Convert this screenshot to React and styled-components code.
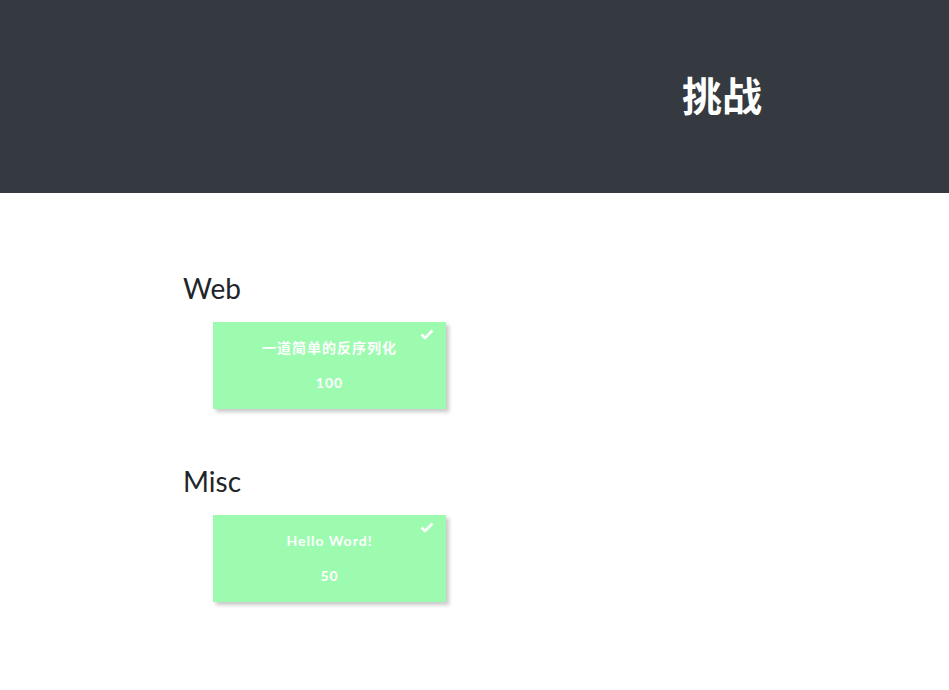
import React from 'react'
import styled, { createGlobalStyle } from 'styled-components';

const Global = createGlobalStyle`
  body {
    margin:0;
    background:#fff;
    font-family:Lato, "Noto Sans CJK SC", sans-serif;
  }
`;

const Header = styled.div`
  background-color:#343a40;
  height:193px;
  display:flex;
  align-items:center;
  justify-content:center;
  padding:0 0 6px 495px;
  box-sizing:border-box;
`;

const Title = styled.h1`
  margin:0;
  color:#fff;
  font-size:40px;
  font-weight:700;
  font-family:Lato, "Noto Sans CJK SC", sans-serif;
`;

const Main = styled.div`
  padding:78px 0 0 183px;
`;

const Category = styled.div`
  margin-bottom:55px;
`;

const CategoryName = styled.h3`
  margin:0 0 17px;
  font-size:28px;
  font-weight:400;
  line-height:34px;
  color:#212529;
`;

const Card = styled.div`
  position:relative;
  margin-left:30px;
  width:233px;
  height:87px;
  background-color:#9dfbb0;
  box-shadow:3px 3px 4px rgba(0,0,0,0.22);
  color:#fff;
  display:flex;
  flex-direction:column;
  align-items:center;
  justify-content:center;
  gap:17px;
  font-weight:700;
  font-size:14px;
  letter-spacing:1px;
`;

const Check = styled.svg`
  position:absolute;
  top:7px;
  right:12px;
`;

const Line = styled.div`
  line-height:18px;
`;

const challenges = [
  { category:'Web', name:'一道简单的反序列化', value:100 },
  { category:'Misc', name:'Hello Word!', value:50 },
];

const App = () => {
  return (
    <>
      <Global/>
      <Header>
        <Title>挑战</Title>
      </Header>
      <Main>
        {challenges.map(c => (
          <Category key={c.category}>
            <CategoryName>{c.category}</CategoryName>
            <Card>
              <Check width="14" height="11" viewBox="0 0 14 11">
                <path d="M1.5 5.5 L5 9 L12.5 1.5" stroke="#fff" strokeWidth="2.6" fill="none"/>
              </Check>
              <Line>{c.name}</Line>
              <Line>{c.value}</Line>
            </Card>
          </Category>
        ))}
      </Main>
    </>
  )
}

export default App
